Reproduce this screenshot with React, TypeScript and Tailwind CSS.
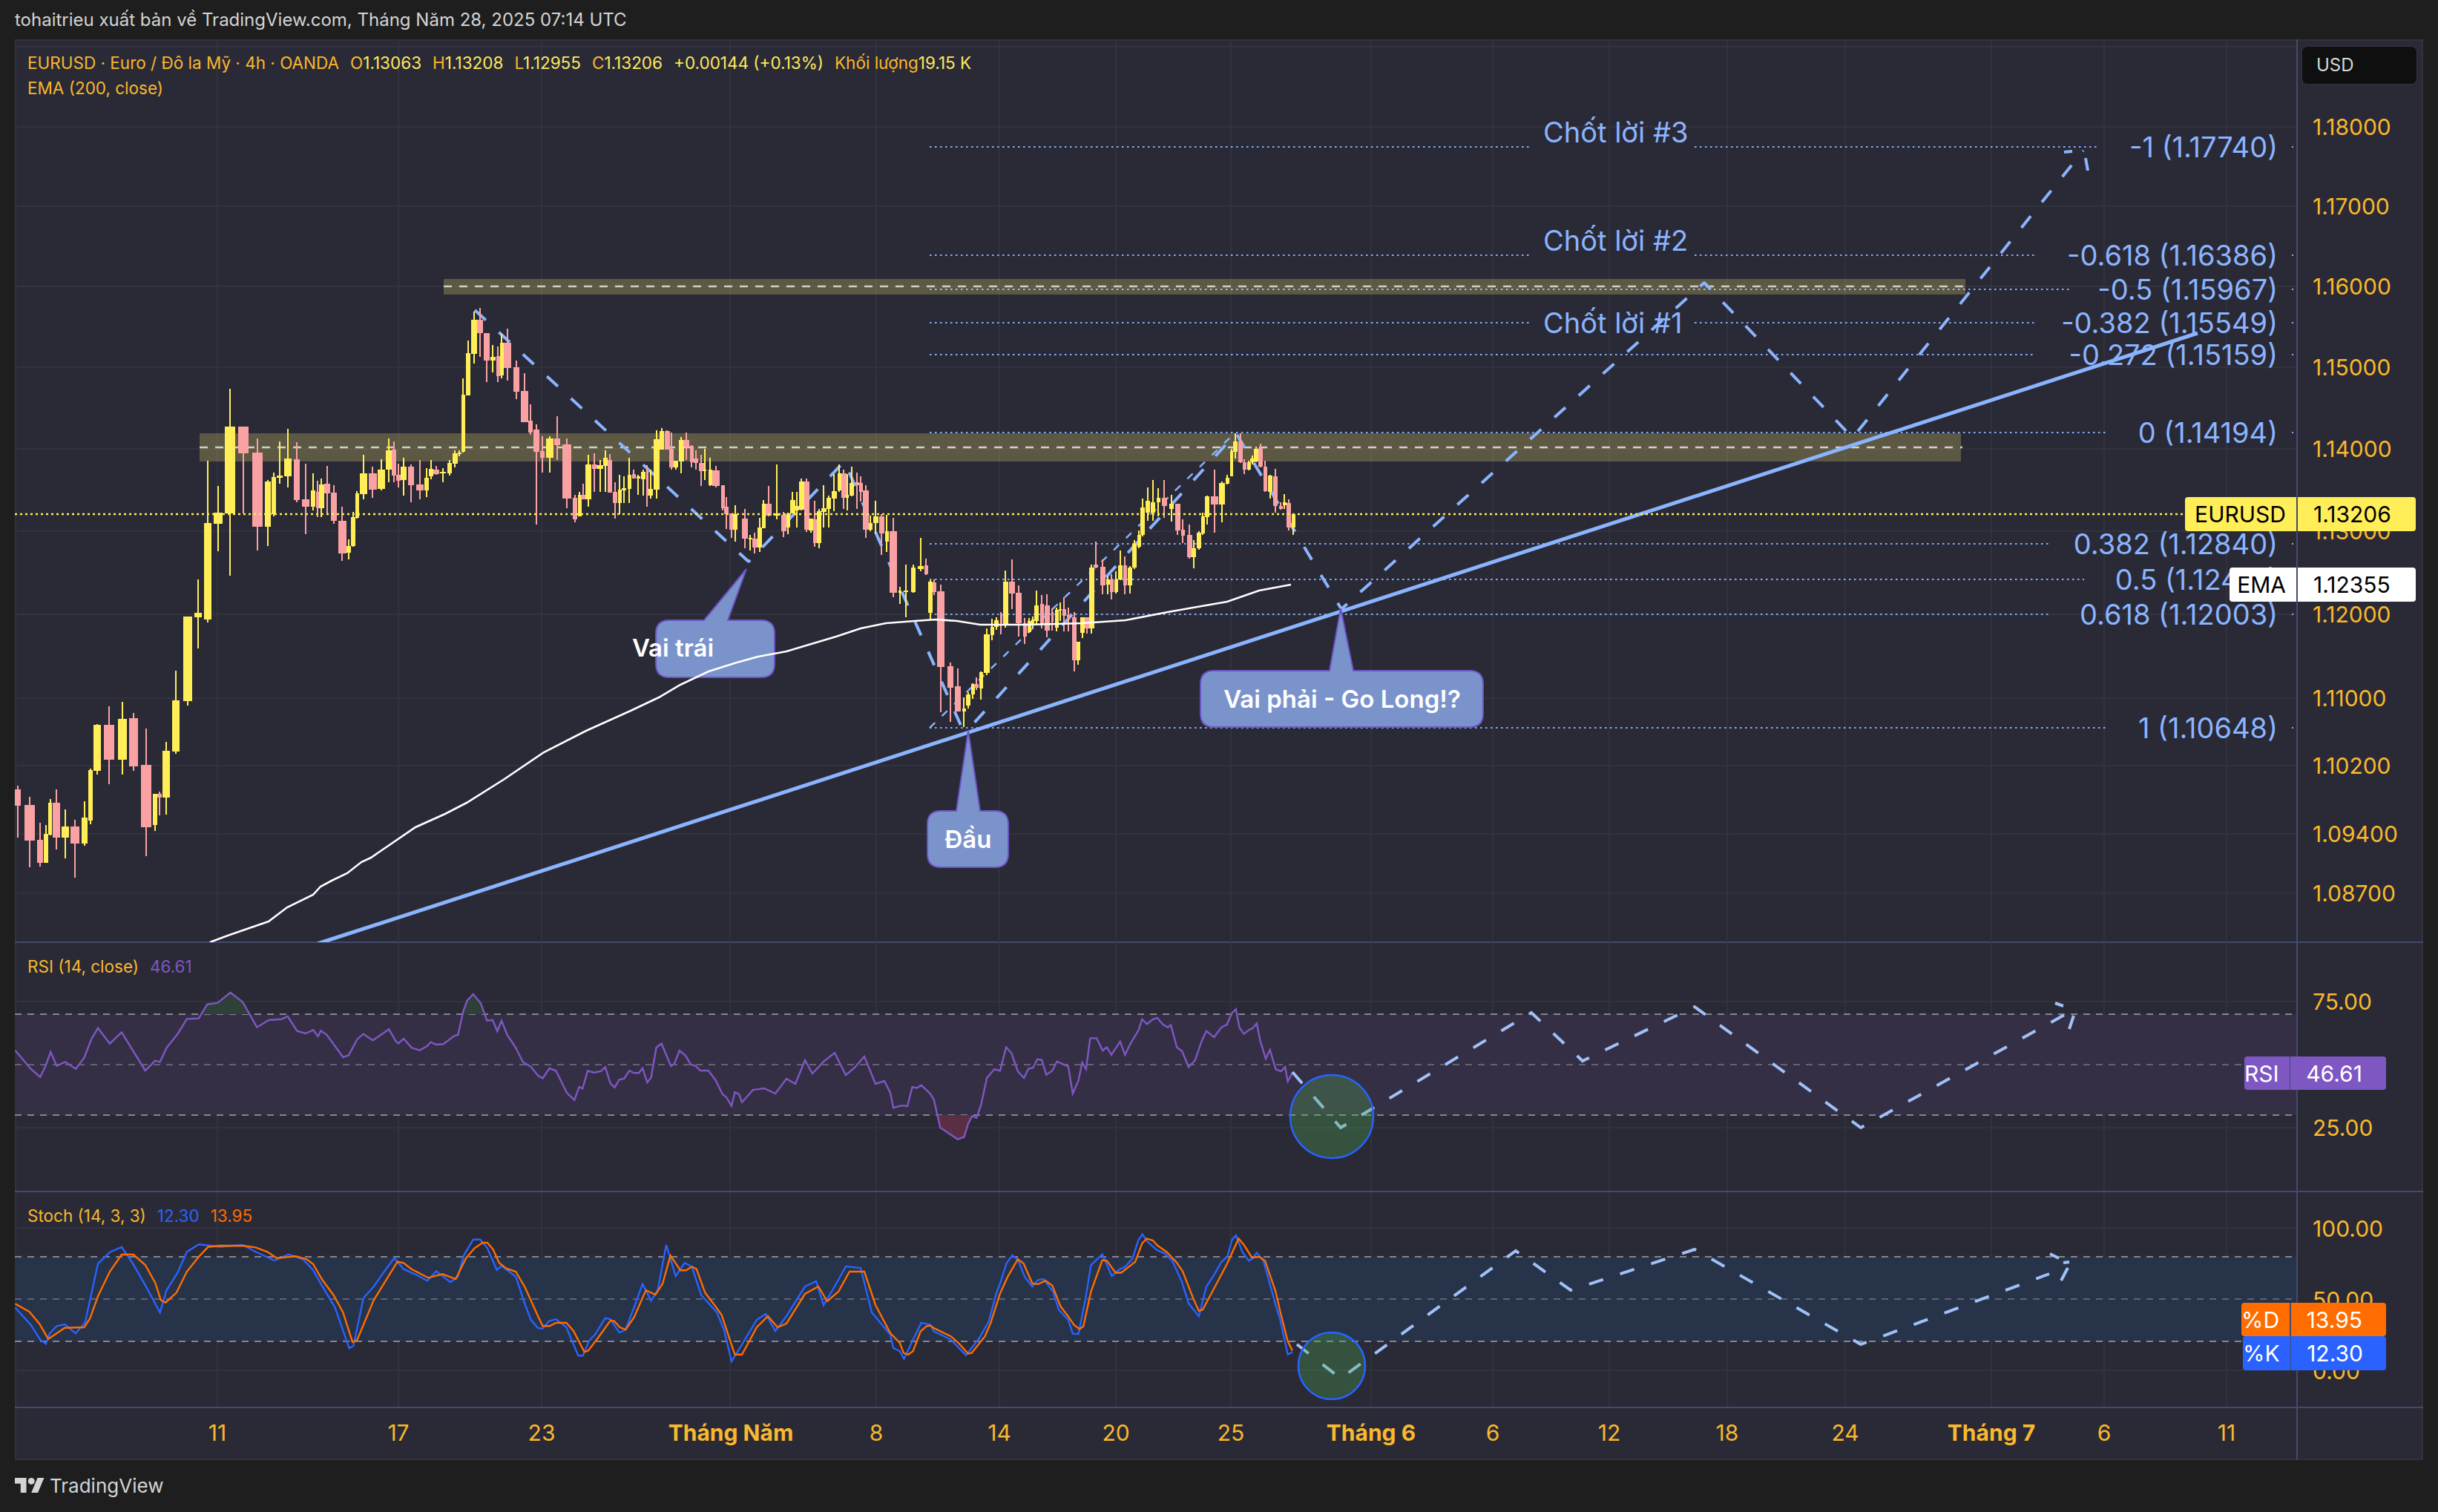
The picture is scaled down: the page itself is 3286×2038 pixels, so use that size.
import React from "react";

// [x, width, high, bodyTop, bodyBottom, low, isYellow]
const C: number[][] = [
[24,8,1059,1064,1086,1129,0],[40,14,1074,1085,1133,1169,0],[54,8,1109,1132,1163,1168,0],[62,6,1112,1124,1163,1163,1],[67.5,5,1077,1082,1125,1126,1],[76,10,1064,1082,1129,1145,0],[88,10,1091,1114,1129,1157,1],[101,12,1105,1114,1137,1183,0],[114,8,1080,1102,1137,1140,1],[122,6,1036,1038,1106,1111,1],[131,10,976,977,1039,1044,1],[147,14,952,977,1024,1057,0],[165,12,946,969,1024,1044,1],[180,12,961,968,1033,1039,0],[197,14,982,1031,1115,1154,0],[209,6,1070,1070,1112,1120,1],[215,6,1067,1070,1075,1099,0],[224,10,1000,1012,1075,1098,1],[237,10,904,944,1013,1016,1],[253,12,831,831,945,951,1],[267,10,781,826,832,874,1],
[280,10,621,705,835,839,1],[294,12,655,691,706,743,1],[310,14,524,575,692,776,1],[328,14,575,575,611,692,0],[347,14,591,610,710,742,0],[361,8,647,649,710,736,1],[369,6,637,643,693,696,1],[377,8,595,641,644,652,1],[388,10,578,618,642,657,1],[400,8,596,619,674,677,0],[412,10,625,673,683,720,0],[422,6,638,661,683,688,1],[428,5,648,663,685,697,0],[433,7,645,653,685,697,1],[441,8,628,652,665,694,0],[450,8,654,664,702,706,0],[461,11,683,702,746,756,0],[470,6,727,736,745,754,1],[476,6,690,697,736,737,1],[481,5,662,665,698,699,1],[490,10,613,638,666,673,1],[502,11,629,638,660,671,0],[514,10,619,633,659,661,1],[524,8,591,607,633,650,1],[531,6,595,606,641,650,0],[537,6,625,640,648,657,0],[544,8,617,629,647,668,1],[554,8,626,629,654,677,0],[566,10,620,653,661,673,0],[575,6,631,644,661,670,1],[581,6,620,632,642,646,1],[588,8,628,633,639,640,0],[597,8,631,636,638,650,1],[606,6,620,624,638,641,1],[613,7,607,611,625,630,1],[619,5,607,610,612,615,1],[624,5,510,532,609,610,1],[631,6,459,476,533,533,1],[639,8,420,431,477,490,1],[647,8,415,431,449,481,0],[656,8,449,449,486,515,0],[664,7,465,481,486,502,1],[671,5,467,480,507,515,0],[676,5,450,462,506,510,1],[684,10,443,462,496,513,0],[696,8,486,495,528,538,0],[707,10,503,527,569,569,0],[715,6,545,567,583,586,0],[723,8,572,579,609,707,0],[731,6,588,608,617,637,0],[741,10,588,591,617,637,1],[751,8,561,591,600,620,0],[764,12,591,599,672,685,0],[775,6,667,671,700,704,0],[781,5,663,667,696,696,1],[786,6,652,667,673,673,0],[793,8,613,626,673,683,1],[801,7,611,626,632,663,0],[809,8,620,627,632,663,1],[816,6,607,617,628,663,1],[822,6,612,620,664,664,0],[829,6,650,663,678,699,0],[835,5,640,660,678,693,1],[841,6,642,658,661,678,1],[848,5,617,640,659,678,1],[854,5,633,639,645,645,0],[860,5,640,642,645,667,1],[867,6,633,636,646,668,1],[872,3,627,635,668,683,0],[877,6,633,659,668,672,1],[885,8,580,592,660,672,1],[892,6,577,581,606,606,1],[899,7,580,581,606,606,0],[905,6,583,605,630,633,0],[911,6,621,621,630,633,1],[918,7,589,593,622,638,1],[925,8,583,593,602,620,0],[932,5,600,601,623,630,0],[938,6,607,618,624,633,0],[945,7,613,624,635,655,0],[950,4,605,633,635,647,1],[957,5,617,633,654,655,1],[965,10,628,634,655,657,0],[974,5,654,654,685,688,0],[979,6,670,683,693,713,0],[986,6,692,692,714,725,0],[991,6,681,693,714,730,1],
[1004,8,686,699,726,739,0],[1011,5,721,725,727,742,1],[1017,7,718,726,738,746,0],[1024,6,698,711,738,744,1],[1029,5,674,679,712,712,1],[1036,8,655,679,695,696,0],[1047,8,626,692,695,700,1],[1056,7,690,694,716,724,0],[1062,5,691,692,711,720,1],[1068,7,663,674,692,692,1],[1074,5,663,682,688,711,1],[1080,7,645,649,687,688,1],[1087,7,645,649,714,717,0],[1093,6,699,699,715,718,1],[1098,5,675,700,732,737,0],[1104,6,686,689,732,739,1],[1110,7,654,685,690,711,1],[1117,6,668,671,686,711,1],[1124,7,639,662,672,689,1],[1131,5,626,638,661,663,1],[1137,7,633,638,671,686,0],[1142,4,639,667,671,688,1],[1148,6,629,651,668,669,1],[1155,5,637,650,654,686,0],[1160,5,642,651,663,676,0],[1167,8,654,661,714,725,0],[1173,5,695,705,714,716,1],[1180,7,675,696,705,719,1],[1188,7,693,696,719,748,0],[1195,5,694,716,730,744,1],[1204,10,698,716,799,805,0],[1213,4,791,796,799,814,1],[1221,6,761,796,798,832,1],[1231,6,761,765,798,799,1],[1241,8,725,763,767,770,1],[1248,5,753,762,774,775,0],[1254,6,782,784,826,836,1],[1259,5,781,785,798,802,0],[1268,10,788,797,899,960,0],[1281,8,893,898,927,973,0],[1291,8,901,925,959,959,0],[1299,5,940,955,959,980,1],[1305,6,933,936,951,955,1],[1311,5,921,922,936,942,1],[1316,6,913,922,927,930,0],[1322,5,905,906,928,943,1],[1330,8,847,855,907,910,1],[1337,5,834,845,856,863,1],[1343,6,832,836,845,849,1],[1349,3,825,828,840,855,0],[1355,7,769,784,842,846,1],[1364,8,754,784,800,821,0],[1373,8,789,799,840,858,0],[1381,5,833,840,858,868,0],[1387,5,833,837,852,853,1],[1392,4,831,835,842,847,1],[1397,6,796,816,837,842,1],[1404,5,802,814,842,847,0],[1411,7,801,816,850,859,0],[1418,3,820,825,838,850,0],[1424,5,819,822,846,851,1],[1429,4,812,821,823,837,1],[1434,5,805,821,830,851,0],[1440,5,819,829,832,851,0],[1448,6,825,832,890,905,0],[1453,5,865,865,890,896,1],[1459,6,832,832,853,860,1],[1465,6,832,832,847,854,0],[1471,7,761,765,847,854,1],[1477,6,730,761,765,766,0],[1486,7,754,764,789,801,0],[1493,5,777,781,788,801,1],[1498,5,774,781,798,808,0],[1504,5,770,781,798,800,1],[1510,6,742,762,781,782,1],[1516,5,750,762,789,801,0],[1523,6,763,765,789,800,1],[1529,6,728,733,765,767,1],[1535,5,715,721,737,739,1],[1540,6,672,684,721,723,1],[1547,6,657,675,691,702,1],[1554,6,647,677,691,702,1],[1561,5,658,671,677,696,1],[1569,7,647,671,682,698,0],[1579,6,667,679,686,703,1],[1587,7,679,679,715,721,0],[1594,5,700,714,722,732,0],[1603,7,707,721,751,753,0],[1609,6,728,739,751,766,1],[1616,6,716,718,739,741,1],[1621,5,691,696,719,721,1],[1627,6,668,669,697,707,1],[1637,10,633,669,680,718,0],[1647,8,649,651,680,704,1],[1654,5,640,644,652,653,1],[1660,4,605,608,642,642,1],[1665,6,584,595,609,618,1],[1672,6,584,595,623,624,0],[1677,5,619,623,633,639,0],[1683,5,621,623,633,634,1],[1688,6,614,618,623,626,1],[1693,6,602,605,622,623,1],[1699,6,598,604,629,630,0],[1705,5,621,629,662,663,0],[1712,6,640,641,663,672,1],[1719,6,632,642,682,691,0],[1726,5,677,682,686,687,0],[1731,5,666,677,681,686,1],[1737,6,673,678,711,715,0],[1743,5,692,693,711,721,1],
];

const fromZ = (pts: number[][], sx: number, sy: number, ox: number, oy: number) =>
  pts.map(([a, b]) => `${(ox + a / sx).toFixed(1)},${(oy + b / sy).toFixed(1)}`).join(" ");

const EMA = "283,1270 307,1261 333,1252 362,1242 387,1223 422,1206 432,1195 447,1187 468,1177 487,1162 500,1156 560,1115 600,1097 629,1082 680,1050 733,1014 790,985 850,958 888,940 917,923 955,905 993,893 1022,885 1060,878 1080,872 1127,858 1160,847 1194,840 1233,837 1261,835 1290,837 1321,842 1386,842 1459,840 1517,836 1574,825 1608,819 1654,811 1697,796 1740,788";

const RSI_A = fromZ([[32,470],[65,545],[85,578],[96,535],[107,477],[120,533],[138,517],[160,545],[178,500],[193,425],[207,380],[232,443],[257,397],[307,552],[328,512],[338,517],[352,460],[375,405],[395,343],[420,341],[438,284],[460,278],[487,236],[513,275],[543,377],[568,348],[595,344],[608,333],[628,392],[646,402],[662,388],[672,413],[678,391],[691,408],[725,498],[737,490],[755,425],[768,404],[788,430],[822,385],[836,432],[842,442],[853,423],[870,460],[887,470],[903,452],[910,437],[922,447],[937,445],[960,412],[968,408],[979,312],[987,270],[1000,243],[1016,280],[1029,350],[1041,347],[1051,393],[1060,350],[1072,408],[1090,460],[1105,517],[1122,537],[1137,572],[1147,583],[1161,543],[1175,553],[1198,642],[1214,671],[1224,618],[1231,625],[1242,553],[1255,560],[1270,555],[1279,538],[1290,603],[1299,620],[1309,588],[1319,585],[1330,552],[1340,562],[1350,562],[1358,542],[1368,600],[1376,580],[1387,458],[1398,443],[1418,534],[1425,525],[1436,472],[1448,490],[1460,527],[1470,533],[1480,552],[1497,552],[1512,590],[1527,648],[1535,660],[1546,695],[1553,640],[1562,648],[1568,680]], 1.568, 3, 0, 1260);
const RSI_B = "1015,1470 1030,1468 1045,1475 1060,1455 1072,1462 1085,1430 1095,1448 1110,1432 1125,1420 1140,1450 1152,1440 1165,1425 1180,1462 1192,1458";
const RSI_C = fromZ([[0,390],[8,435],[30,428],[45,430],[58,372],[70,375],[82,367],[105,392],[115,410],[132,495],[178,530],[195,523],[205,485],[216,460],[228,465],[240,425],[255,345],[275,318],[290,323],[306,252],[320,270],[337,325],[353,345],[365,317],[377,314],[388,289],[400,290],[412,335],[428,323],[440,295],[470,310],[482,392],[497,352],[507,298],[517,318],[528,225],[545,225],[561,262],[572,252],[584,275],[607,235],[620,275],[635,240],[656,200],[665,168],[678,182],[693,168],[705,163],[720,183],[733,192],[741,185],[757,252],[771,265],[788,312],[805,292],[822,235],[835,203],[855,222],[875,192],[889,184],[902,150],[913,137],[922,192],[934,212],[947,200],[957,195],[968,180],[977,232],[992,287],[1003,260],[1018,318],[1032,325],[1043,312],[1050,355],[1063,328]], 1.96, 2.24, 1200, 1300);

const K_A = fromZ([[32,490],[65,560],[85,620],[97,637],[105,595],[120,565],[137,558],[160,595],[180,550],[207,313],[232,267],[257,245],[280,310],[307,400],[338,510],[352,420],[375,350],[395,265],[420,235],[445,240],[465,245],[490,240],[513,237],[540,265],[580,300],[610,275],[640,295],[662,340],[680,400],[708,490],[738,655],[747,645],[768,452],[790,405],[810,350],[833,290],[853,335],[880,358],[903,382],[922,343],[952,388],[968,365],[980,280],[1000,215],[1015,215],[1030,250],[1050,338],[1060,322],[1090,365],[1110,480],[1122,540],[1137,573],[1147,575],[1160,545],[1175,537],[1197,570],[1222,685],[1232,685],[1245,625],[1258,598],[1279,533],[1290,537],[1309,592],[1322,580],[1340,490],[1358,395],[1376,463],[1390,420],[1408,237],[1428,363],[1447,310],[1462,325],[1482,440],[1515,510],[1530,580],[1546,708],[1568,640]], 1.568, 3, 0, 1600);
const K_B = "1020,1780 1032,1772 1045,1795 1060,1775 1085,1735 1100,1728 1110,1760 1125,1735 1140,1708 1160,1710 1175,1770";
const K_C = fromZ([[0,1120],[8,1160],[25,1170],[36,1193],[60,1135],[82,1084],[105,1090],[115,1110],[160,1135],[200,1182],[235,1130],[260,1080],[280,995],[290,965],[307,905],[322,880],[337,893],[355,945],[375,975],[390,955],[405,952],[430,990],[445,1045],[470,1075],[482,1117],[497,1118],[515,1015],[530,910],[560,877],[585,943],[605,923],[620,915],[640,890],[655,835],[666,817],[680,840],[705,865],[725,875],[745,897],[770,960],[788,1025],[815,1065],[835,975],[855,940],[875,900],[890,885],[903,833],[913,820],[930,870],[947,897],[957,890],[968,873],[985,895],[1018,1030],[1030,1075],[1050,1180],[1063,1172]], 1.96, 2.24, 1200, 1300);
const D_A = fromZ([[32,475],[62,507],[83,555],[102,617],[137,572],[178,570],[190,535],[207,445],[232,345],[257,276],[282,276],[307,318],[328,390],[340,460],[350,470],[373,430],[395,345],[420,285],[440,245],[465,240],[515,241],[540,247],[565,265],[585,290],[625,283],[648,295],[662,315],[680,375],[705,440],[725,510],[745,630],[755,620],[790,460],[840,305],[853,310],[870,335],[905,370],[935,355],[963,375],[985,290],[1003,250],[1020,228],[1030,228],[1042,255],[1055,310],[1070,332],[1090,345],[1110,410],[1137,525],[1147,565],[1162,565],[1175,552],[1197,552],[1212,585],[1235,670],[1243,665],[1265,610],[1290,543],[1298,545],[1310,570],[1322,580],[1340,530],[1365,420],[1385,438],[1400,395],[1417,280],[1438,340],[1450,340],[1462,325],[1472,335],[1490,430],[1510,480],[1525,520],[1553,680],[1568,680]], 1.568, 3, 0, 1600);
const D_B = "1020,1790 1035,1775 1048,1790 1060,1785 1085,1745 1103,1735 1115,1755 1130,1742 1145,1715 1165,1715 1180,1760";
const D_C = fromZ([[0,1115],[25,1145],[35,1175],[47,1180],[60,1170],[80,1110],[95,1095],[105,1092],[115,1100],[160,1125],[180,1145],[205,1177],[215,1175],[250,1125],[265,1085],[290,995],[310,945],[337,892],[352,905],[375,965],[390,968],[410,957],[428,972],[450,1035],[470,1065],[485,1090],[500,1103],[510,1095],[530,990],[560,895],[572,897],[595,933],[610,933],[647,900],[665,845],[677,830],[693,835],[705,850],[730,870],[755,900],[772,928],[800,1010],[815,1048],[825,1045],[860,970],[890,905],[920,830],[935,850],[955,887],[975,885],[990,897],[1018,990],[1030,1050],[1050,1140],[1062,1168]], 1.96, 2.24, 1200, 1300);

const VX = [293, 537, 730, 984, 1181, 1347, 1504, 1659, 1848, 2012, 2169, 2328, 2487, 2684, 2836, 3001];
const X0 = 20, X1 = 3095;

const FIB: { t: string; y: number; end: number; gap?: boolean }[] = [
  { t: "-1 (1.17740)", y: 198, end: 2826, gap: true },
  { t: "-0.618 (1.16386)", y: 344, end: 2742, gap: true },
  { t: "-0.5 (1.15967)", y: 390, end: 2790 },
  { t: "-0.382 (1.15549)", y: 435, end: 2742, gap: true },
  { t: "-0.272 (1.15159)", y: 478, end: 2742 },
  { t: "0 (1.14194)", y: 583, end: 2839 },
  { t: "0.382 (1.12840)", y: 733, end: 2761 },
  { t: "0.5 (1.12421)", y: 781, end: 2809 },
  { t: "0.618 (1.12003)", y: 828, end: 2761 },
  { t: "1 (1.10648)", y: 981, end: 2839 },
];

const PRICES: [string, number][] = [["1.18000", 171], ["1.17000", 278], ["1.16000", 386], ["1.15000", 495], ["1.14000", 605], ["1.13000", 716], ["1.12000", 828], ["1.11000", 941], ["1.10200", 1032], ["1.09400", 1124], ["1.08700", 1204]];

const TIME: [string, number, boolean][] = [["11", 293, false], ["17", 537, false], ["23", 730, false], ["Tháng Năm", 985, true], ["8", 1181, false], ["14", 1347, false], ["20", 1504, false], ["25", 1659, false], ["Tháng 6", 1848, true], ["6", 2012, false], ["12", 2169, false], ["18", 2328, false], ["24", 2487, false], ["Tháng 7", 2684, true], ["6", 2836, false], ["11", 3001, false]];

function VGrid({ y0, y1 }: { y0: number; y1: number }) {
  return <g stroke="#32323f" strokeWidth="2">{VX.map((x) => <line key={x} x1={x} x2={x} y1={y0} y2={y1} />)}</g>;
}
function HGrid({ ys }: { ys: number[] }) {
  return <g stroke="#32323f" strokeWidth="2.5">{ys.map((y) => <line key={y} x1={X0} x2={X1} y1={y} y2={y} />)}</g>;
}
function Band({ ys, fill }: { ys: [number, number, number]; fill: string }) {
  return (
    <g>
      <rect x={X0} y={ys[0]} width={X1 - X0} height={ys[2] - ys[0]} fill={fill} />
      <g stroke="#85858f" strokeWidth="2" strokeDasharray="9 8">
        {ys.map((y, i) => <line key={y} x1={X0} x2={X1} y1={y} y2={y} opacity={i === 1 ? 0.6 : 1} />)}
      </g>
    </g>
  );
}

function bubble(x0: number, y0: number, x1: number, y1: number, r: number, bl: number, br: number, tx: number, ty: number) {
  return `M${x0 + r},${y0} L${bl},${y0} L${tx},${ty} L${br},${y0} L${x1 - r},${y0} Q${x1},${y0} ${x1},${y0 + r} L${x1},${y1 - r} Q${x1},${y1} ${x1 - r},${y1} L${x0 + r},${y1} Q${x0},${y1} ${x0},${y1 - r} L${x0},${y0 + r} Q${x0},${y0} ${x0 + r},${y0} Z`;
}

function Candles() {
  return (
    <g shapeRendering="crispEdges">
      {C.map(([x, w, hi, top, bot, lo, up], i) => {
        const f = up ? "#ffee58" : "#faa1a4";
        return (
          <g key={i} fill={f}>
            <rect x={x - 1} y={hi} width={2.4} height={lo - hi} />
            <rect x={x - w / 2} y={top} width={w} height={Math.max(2, bot - top)} />
          </g>
        );
      })}
    </g>
  );
}

function Abs({ x, y, className, children }: { x: number; y: number; className: string; children: React.ReactNode }) {
  return <div className={`absolute whitespace-nowrap ${className}`} style={{ left: x, top: y }}>{children}</div>;
}

function MainPlot() {
  const z1 = { x: 598, w: 2051, y: 376, h: 21, d: 386 };
  const z2 = { x: 269, w: 2374, y: 584, h: 38, d: 603 };
  const blue = "#8ab4ff";
  return (
    <svg viewBox="20 53 3075 1217" className="block w-[3075px] h-[1217px]">
      <HGrid ys={[63, 171, 278, 386, 495, 605, 716, 828, 941, 1032, 1124, 1204]} />
      <VGrid y0={53} y1={1270} />
      <g stroke="#82aeff" strokeWidth="2" strokeDasharray="2.5 4.5">
        {FIB.map((f) => f.gap ? (
          <g key={f.y}>
            <line x1={1253} x2={2063} y1={f.y} y2={f.y} />
            <line x1={2284} x2={f.end} y1={f.y} y2={f.y} />
          </g>
        ) : <line key={f.y} x1={1253} x2={f.end} y1={f.y} y2={f.y} />)}
      </g>
      <g fill="#82aeff">{FIB.map((f) => <rect key={f.y} x={3089} y={f.y - 1} width={2} height={2} />)}</g>
      {[z1, z2].map((z) => (
        <g key={z.y}>
          <rect x={z.x} y={z.y} width={z.w} height={z.h} fill="#ffee6e" opacity="0.235" />
          <line x1={z.x} x2={z.x + z.w + 2} y1={z.d} y2={z.d} stroke="#cfcfc8" strokeWidth="2.5" strokeDasharray="11 10" />
        </g>
      ))}
      <polyline points="1253,981 1665,583" fill="none" stroke={blue} strokeWidth="2.4" strokeDasharray="10 13" />
      <polyline points="640,418 1009,757 1138,622 1296,980 1307,981 1666,584 1808,821 2297,381 2497,590 2808,203" fill="none" stroke={blue} strokeWidth="4" strokeDasharray="20 24" strokeLinejoin="bevel" />
      <g stroke={blue} strokeWidth="4">
        <line x1="2782" y1="205" x2="2793" y2="204" />
        <line x1="2811" y1="213" x2="2814" y2="230" />
      </g>
      <line x1="428" y1="1272" x2="2962" y2="449" stroke="#8ab4ff" strokeWidth="5" />
      <g fill="#7b93cb" stroke="#6c54c6" strokeWidth="2">
        <path d={bubble(884, 836, 1044, 913, 18, 949, 981, 1006, 767)} />
        <path d={bubble(1250, 1093, 1359, 1169, 18, 1289, 1321, 1305, 985)} />
        <path d={bubble(1618, 904, 1999, 980, 18, 1792, 1824, 1807, 820)} />
      </g>
      <Candles />
      <line x1={X0} x2={X1} y1="693" y2="693" stroke="#ffee58" strokeWidth="2.5" strokeDasharray="3 4" />
      <polyline points={EMA} fill="none" stroke="#ffffff" strokeWidth="2.6" />
    </svg>
  );
}

function RsiPlot() {
  const a = 1.568, o = 1260;
  const g1 = [[423, 324], [438, 284], [460, 278], [487, 236], [513, 275], [527, 324]];
  const g2 = [[977, 324], [987, 270], [1000, 243], [1016, 280], [1026, 324]];
  const r1 = [[125, 457], [132, 495], [178, 530], [195, 523], [205, 485], [216, 457]];
  return (
    <svg viewBox="20 1272 3075 334" className="block w-[3075px] h-[334px]">
      <HGrid ys={[1351, 1521]} />
      <VGrid y0={1272} y1={1606} />
      <Band ys={[1368, 1436, 1504]} fill="#352f46" />
      <polygon points={fromZ(g1, a, 3, 0, o)} fill="#2f4038" />
      <polygon points={fromZ(g2, a, 3, 0, o)} fill="#2f4038" />
      <polygon points={fromZ(r1, 1.96, 2.24, 1200, 1300)} fill="#5a2f44" />
      <polyline points={`${RSI_A} ${RSI_B} ${RSI_C}`} fill="none" stroke="#7e57c2" strokeWidth="2.4" />
      <polyline points="1742,1446 1807,1521 2064,1366 2133,1431 2284,1358 2508,1521 2786,1367" fill="none" stroke="#9fc1f8" strokeWidth="4" strokeDasharray="20 24" />
      <g stroke="#9fc1f8" strokeWidth="4">
        <line x1="2770" y1="1353" x2="2781" y2="1357" />
        <line x1="2795" y1="1370" x2="2789" y2="1388" />
      </g>
      <ellipse cx="1795" cy="1506" rx="56" ry="56" fill="#4caf50" fillOpacity="0.3" stroke="#2962ff" strokeWidth="2.5" />
    </svg>
  );
}

function StochPlot() {
  return (
    <svg viewBox="20 1608 3075 289" className="block w-[3075px] h-[289px]">
      <HGrid ys={[1656, 1848]} />
      <VGrid y0={1608} y1={1897} />
      <Band ys={[1695, 1752, 1809]} fill="#273349" />
      <polyline points={`${K_A} ${K_B} ${K_C}`} fill="none" stroke="#2962ff" strokeWidth="2.4" />
      <polyline points={`${D_A} ${D_B} ${D_C}`} fill="none" stroke="#ff6d00" strokeWidth="2.4" />
      <polyline points="1748,1813 1807,1859 2043,1687 2117,1740 2284,1685 2508,1813 2762,1718" fill="none" stroke="#9fc1f8" strokeWidth="4" strokeDasharray="20 24" />
      <g stroke="#9fc1f8" strokeWidth="4">
        <line x1="2763" y1="1691" x2="2775" y2="1697" />
        <line x1="2789" y1="1702" x2="2781" y2="1703" />
        <line x1="2787" y1="1710" x2="2778" y2="1727" />
      </g>
      <ellipse cx="1795" cy="1842" rx="45" ry="45" fill="#4caf50" fillOpacity="0.3" stroke="#2962ff" strokeWidth="2.5" />
    </svg>
  );
}

function Tag({ x, y, w, h, label, value, className }: { x: number; y: number; w: number; h: number; label: string; value: string; className: string }) {
  return (
    <div className={`absolute flex items-center rounded-[4px] text-[30px] leading-none ${className}`} style={{ left: x, top: y, width: w, height: h }}>
      <div className="flex-1 pr-[14px] text-right">{label}</div>
      <div className="w-[2px] self-stretch bg-[#434a6c]" />
      <div className="w-[159px] pl-[21px]">{value}</div>
    </div>
  );
}

const amber = "text-[#f9b82d]";

export default function App() {
  return (
    <div className="w-[3286px] h-[2038px] bg-[#1e1e1e] flex flex-col [font-family:Inter,sans-serif] overflow-hidden">
      <header className="h-[53px] pl-5 flex items-center text-[24px] leading-none text-[#d4d4d4]">
        tohaitrieu xuất bản về TradingView.com, Tháng Năm 28, 2025 07:14 UTC
      </header>

      <main className="ml-5 w-[3246px] h-[1915px] flex flex-col bg-[#2a2a36] relative outline-2 -outline-offset-2 outline-[#32323d]">
        {/* main pane */}
        <section className="relative flex h-[1218px] border-b-2 border-[#434a6c]">
          <div className="w-[3075px] relative">
            <MainPlot />
            <div className="absolute left-[17px] top-[20px] flex flex-col gap-[11px] text-[22.5px] leading-[23px]">
              <div className="flex text-[#ffe95c] whitespace-nowrap">
                <span className={`${amber} mr-[15px]`}>EURUSD · Euro / Đô la Mỹ · 4h · OANDA</span>
                <span className="mr-[15px]"><span className={amber}>O</span>1.13063</span>
                <span className="mr-[15px]"><span className={amber}>H</span>1.13208</span>
                <span className="mr-[15px]"><span className={amber}>L</span>1.12955</span>
                <span className="mr-[15px]"><span className={amber}>C</span>1.13206</span>
                <span className="mr-[15px]">+0.00144 (+0.13%)</span>
                <span className={amber}>Khối lượng</span>
                <span>19.15 K</span>
              </div>
              <div className={amber}>EMA (200, close)</div>
            </div>
            {FIB.map((f) => (
              <div key={f.y} className="absolute right-[25px] -translate-y-1/2 text-[38px] leading-none text-[#8ab4ff] whitespace-nowrap" style={{ top: f.y - 53 }}>{f.t}</div>
            ))}
            <Abs x={2060} y={125} className="-translate-y-1/2 text-[38px] leading-none text-[#8ab4ff]">Chốt lời #3</Abs>
            <Abs x={2060} y={271} className="-translate-y-1/2 text-[38px] leading-none text-[#8ab4ff]">Chốt lời #2</Abs>
            <Abs x={2060} y={382} className="-translate-y-1/2 text-[38px] leading-none text-[#8ab4ff]">Chốt lời #1</Abs>
            <Abs x={887} y={820} className="-translate-x-1/2 -translate-y-1/2 text-[33px] leading-none font-semibold text-white">Vai trái</Abs>
            <Abs x={1285} y={1078} className="-translate-x-1/2 -translate-y-1/2 text-[33px] leading-none font-semibold text-white">Đầu</Abs>
            <Abs x={1789} y={889} className="-translate-x-1/2 -translate-y-1/2 text-[33px] leading-none font-semibold text-white">Vai phải - Go Long!?</Abs>
          </div>
          <div className="relative flex-1 border-l-2 border-[#434a6c]">
            <div className="absolute left-[5px] top-[9px] w-[156px] h-[52px] rounded-[8px] bg-[#0f0f10] border border-[#33333e] flex items-center pl-[19px] text-[24px] leading-none text-[#d6d6d6]">USD</div>
            {PRICES.map(([t, y]) => (
              <div key={t} className={`absolute left-[20px] -translate-y-1/2 text-[30px] leading-none ${amber}`} style={{ top: y - 53 }}>{t}</div>
            ))}
          </div>
          <Tag x={2925} y={617} w={311} h={46} label="EURUSD" value="1.13206" className="bg-[#ffee58] text-black" />
          <Tag x={2985} y={712} w={251} h={46} label="EMA" value="1.12355" className="bg-white text-black" />
        </section>

        {/* RSI pane */}
        <section className="relative flex h-[336px] border-b-2 border-[#434a6c]">
          <div className="w-[3075px] relative">
            <RsiPlot />
            <div className="absolute left-[17px] top-[20px] flex gap-[15px] text-[22.5px] leading-[23px] whitespace-nowrap">
              <span className={amber}>RSI (14, close)</span>
              <span className="text-[#7e57c2]">46.61</span>
            </div>
          </div>
          <div className="relative flex-1 border-l-2 border-[#434a6c]">
            <div className={`absolute left-[20px] top-[79px] -translate-y-1/2 text-[30px] leading-none ${amber}`}>75.00</div>
            <div className={`absolute left-[20px] top-[249px] -translate-y-1/2 text-[30px] leading-none ${amber}`}>25.00</div>
          </div>
          <Tag x={3005} y={153} w={191} h={45} label="RSI" value="46.61" className="bg-[#7e57c2] text-white" />
        </section>

        {/* Stoch pane */}
        <section className="relative flex h-[291px] border-b-2 border-[#434a6c]">
          <div className="w-[3075px] relative">
            <StochPlot />
            <div className="absolute left-[17px] top-[20px] flex gap-[15px] text-[22.5px] leading-[23px] whitespace-nowrap">
              <span className={amber}>Stoch (14, 3, 3)</span>
              <span className="text-[#2962ff]">12.30</span>
              <span className="text-[#ff6d00]">13.95</span>
            </div>
          </div>
          <div className="relative flex-1 border-l-2 border-[#434a6c]">
            <div className={`absolute left-[20px] top-[49px] -translate-y-1/2 text-[30px] leading-none ${amber}`}>100.00</div>
            <div className={`absolute left-[20px] top-[145px] -translate-y-1/2 text-[30px] leading-none ${amber}`}>50.00</div>
            <div className={`absolute left-[20px] top-[241px] -translate-y-1/2 text-[30px] leading-none ${amber}`}>0.00</div>
          </div>
          <Tag x={3001} y={149} w={195} h={45} label="%D" value="13.95" className="bg-[#ff6d00] text-white" />
          <Tag x={3003} y={194} w={193} h={46} label="%K" value="12.30" className="bg-[#2962ff] text-white" />
        </section>

        {/* time axis */}
        <section className="relative flex flex-1">
          <div className="w-[3075px] relative">
            {TIME.map(([t, x, bold]) => (
              <div key={t + x} className={`absolute top-[33px] -translate-x-1/2 -translate-y-1/2 text-[30px] leading-none whitespace-nowrap ${amber} ${bold ? "font-bold" : ""}`} style={{ left: x - 20 }}>{t}</div>
            ))}
          </div>
          <div className="flex-1 border-l-2 border-[#434a6c]" />
        </section>
      </main>

      <footer className="flex-1 pl-5 flex items-center gap-[7px] text-[#d4d4d4]">
        <svg viewBox="0 4 36 18" className="w-[40px] h-[20px] -mt-[3px]" fill="#d4d4d4">
          <path d="M14 22H7V11H0V4h14v18zM28 22h-8l7.5-18h8L28 22z" />
          <circle cx="20" cy="8" r="4" />
        </svg>
        <span className="text-[26px] leading-none">TradingView</span>
      </footer>
    </div>
  );
}
